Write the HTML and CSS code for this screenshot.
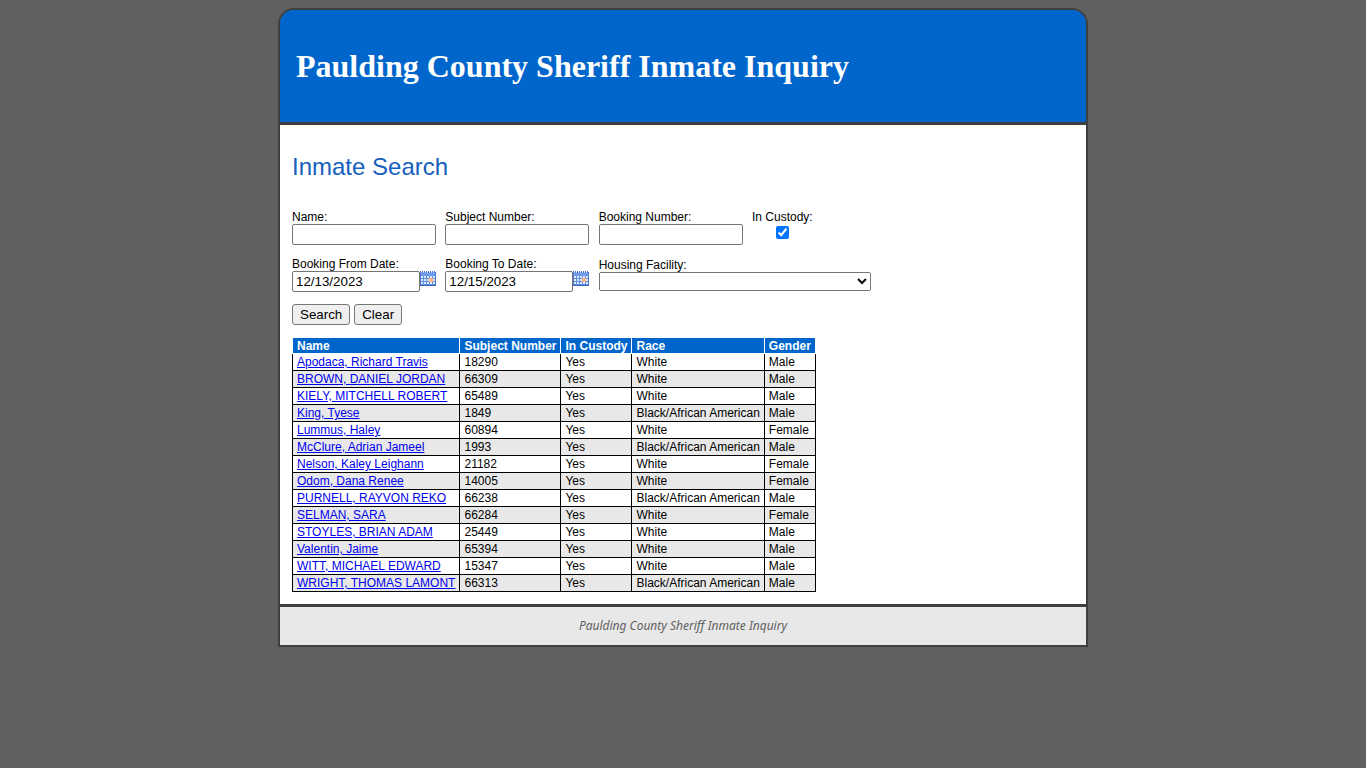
FILE: index.html
```html
<!DOCTYPE html>
<html lang="en">
<head>
  <meta charset="UTF-8">
  <meta name="viewport" content="width=device-width, initial-scale=1">
  <title>Paulding County Sheriff Inmate Inquiry</title>
  <link rel="stylesheet" href="styles.css">
</head>
<body>
  <svg class="sprite" aria-hidden="true">
    <symbol id="calendar" viewBox="0 0 16 16">
      <path fill="#4a78d2" d="M0 1h16v14H0z"/>
      <path fill="#4a78d2" d="M0 0h1v1H0zM2 0h1v1H2zM4 0h1v1H4zM6 0h1v1H6zM8 0h1v1H8zM10 0h1v1h-1zM12 0h1v1h-1zM14 0h1v1h-1z"/>
      <path fill="#bcd0f7" d="M1 1h1v1H1zM3 1h1v1H3zM5 1h1v1H5zM7 1h1v1H7zM9 1h1v1H9zM11 1h1v1h-1zM13 1h1v1h-1z"/>
      <path fill="#6f9aee" d="M1 2h14v3H1z"/>
      <path fill="#5f8ee4" d="M1 5h14v9H1z"/>
      <path fill="#dfeafc" d="M1 5h2v2H1zM4 5h2v2H4zM7 5h2v2H7zM10 5h2v2h-2zM13 5h2v2h-2zM1 8h2v2H1zM4 8h2v2H4zM7 8h2v2H7zM13 8h2v2h-2zM1 11h2v2H1zM4 11h2v2H4zM7 11h2v2H7zM10 11h2v2h-2zM13 11h2v2h-2z"/>
      <path fill="#f8b583" d="M9 7h4v4H9z"/>
      <path fill="#3a67bd" d="M0 14h16v1H0z"/>
    </symbol>
  </svg>

  <div class="page">
    <header class="header">
      <h1>Paulding County Sheriff Inmate Inquiry</h1>
    </header>

    <main class="main">
      <h2>Inmate Search</h2>

      <form id="searchForm">
        <div class="fields">
          <div class="field">
            <label for="name">Name:</label>
            <input type="text" id="name" name="name">
          </div>
          <div class="field">
            <label for="subject">Subject Number:</label>
            <input type="text" id="subject" name="subject">
          </div>
          <div class="field">
            <label for="booking">Booking Number:</label>
            <input type="text" id="booking" name="booking">
          </div>
          <div class="field custody">
            <label for="custody">In Custody:</label>
            <input type="checkbox" id="custody" name="custody" checked>
          </div>
          <div class="field">
            <label for="from">Booking From Date:</label>
            <div class="date">
              <input type="text" id="from" name="from" value="12/13/2023">
              <button type="button" class="picker" aria-label="Pick from date"><svg width="16" height="16"><use href="#calendar"/></svg></button>
            </div>
          </div>
          <div class="field">
            <label for="to">Booking To Date:</label>
            <div class="date">
              <input type="text" id="to" name="to" value="12/15/2023">
              <button type="button" class="picker" aria-label="Pick to date"><svg width="16" height="16"><use href="#calendar"/></svg></button>
            </div>
          </div>
          <div class="field facility">
            <label for="facility">Housing Facility:</label>
            <select id="facility" name="facility">
              <option value=""></option>
            </select>
          </div>
        </div>
        <div class="buttons">
          <button type="submit">Search</button>
          <button type="reset">Clear</button>
        </div>
      </form>

      <table class="results">
        <thead>
          <tr><th>Name</th><th>Subject Number</th><th>In Custody</th><th>Race</th><th>Gender</th></tr>
        </thead>
        <tbody>
          <tr><td><a href="#">Apodaca, Richard Travis</a></td><td>18290</td><td>Yes</td><td>White</td><td>Male</td></tr>
          <tr><td><a href="#">BROWN, DANIEL JORDAN</a></td><td>66309</td><td>Yes</td><td>White</td><td>Male</td></tr>
          <tr><td><a href="#">KIELY, MITCHELL ROBERT</a></td><td>65489</td><td>Yes</td><td>White</td><td>Male</td></tr>
          <tr><td><a href="#">King, Tyese</a></td><td>1849</td><td>Yes</td><td>Black/African American</td><td>Male</td></tr>
          <tr><td><a href="#">Lummus, Haley</a></td><td>60894</td><td>Yes</td><td>White</td><td>Female</td></tr>
          <tr><td><a href="#">McClure, Adrian Jameel</a></td><td>1993</td><td>Yes</td><td>Black/African American</td><td>Male</td></tr>
          <tr><td><a href="#">Nelson, Kaley Leighann</a></td><td>21182</td><td>Yes</td><td>White</td><td>Female</td></tr>
          <tr><td><a href="#">Odom, Dana Renee</a></td><td>14005</td><td>Yes</td><td>White</td><td>Female</td></tr>
          <tr><td><a href="#">PURNELL, RAYVON REKO</a></td><td>66238</td><td>Yes</td><td>Black/African American</td><td>Male</td></tr>
          <tr><td><a href="#">SELMAN, SARA</a></td><td>66284</td><td>Yes</td><td>White</td><td>Female</td></tr>
          <tr><td><a href="#">STOYLES, BRIAN ADAM</a></td><td>25449</td><td>Yes</td><td>White</td><td>Male</td></tr>
          <tr><td><a href="#">Valentin, Jaime</a></td><td>65394</td><td>Yes</td><td>White</td><td>Male</td></tr>
          <tr><td><a href="#">WITT, MICHAEL EDWARD</a></td><td>15347</td><td>Yes</td><td>White</td><td>Male</td></tr>
          <tr><td><a href="#">WRIGHT, THOMAS LAMONT</a></td><td>66313</td><td>Yes</td><td>Black/African American</td><td>Male</td></tr>
        </tbody>
      </table>
    </main>

    <footer class="footer">Paulding County Sheriff Inmate Inquiry</footer>
  </div>
</body>
</html>
```
FILE: styles.css
```css
* {
  box-sizing: border-box;
}

body {
  margin: 8px;
  background: #606060;
  color: #000;
  font-family: Arial, "Liberation Sans", sans-serif;
  font-size: 12px;
  line-height: 14px;
}

.sprite {
  display: none;
}

.page {
  max-width: 810px;
  margin: 0 auto;
  border: 2px solid #3f3f3f;
  border-radius: 16px 16px 0 0;
  overflow: hidden;
}

.header {
  padding: 38px 16px;
  background: #0066cc;
  border-bottom: 3px solid #3f3f3f;
}

h1 {
  margin: 0;
  color: #fff;
  font-family: "Times New Roman", "Liberation Serif", serif;
  font-size: 32px;
  line-height: 36px;
}

.main {
  padding: 28px 12px 12px;
  background: #fff;
}

h2 {
  margin: 0 0 29px;
  color: #1560bd;
  font-size: 24px;
  font-weight: normal;
  line-height: 28px;
}

.fields {
  display: grid;
  grid-template-columns: repeat(4, 144px);
  justify-content: space-between;
  row-gap: 12px;
  align-items: center;
  max-width: 604px;
}

.field label {
  display: block;
}

.field input[type="text"] {
  display: block;
  width: 100%;
  height: 21px;
  padding: 1px 3px;
  border: 1px solid #767676;
  border-radius: 2px;
}

input,
select,
button {
  font-family: Arial, "Liberation Sans", sans-serif;
}

.custody {
  align-self: start;
  justify-self: start;
}

.custody input {
  display: block;
  margin: 2px auto;
}

.date {
  display: flex;
  align-items: flex-start;
}

.date input {
  flex: 1;
  min-width: 0;
}

.picker {
  padding: 0;
  border: 0;
  background: none;
  cursor: pointer;
}

.picker svg {
  display: block;
}

.facility {
  grid-column: span 2;
}

.facility select {
  display: block;
  width: 272px;
  height: 19px;
}

.buttons {
  display: flex;
  gap: 4px;
  margin: 12px 0;
}

.buttons button {
  height: 21px;
  padding: 1px 7px;
  background: #efefef;
  border: 1px solid #767676;
  border-radius: 3px;
}

.results {
  border-collapse: collapse;
}

.results th,
.results td {
  padding: 1px 4px;
  border: 1px solid #000;
  text-align: left;
  white-space: nowrap;
}

.results th {
  padding-bottom: 0;
  background: #0066cc;
  border-color: #fff;
  color: #fff;
}

.results tbody tr:nth-child(even) {
  background: #e8e8e8;
}

.results a {
  color: #0000ee;
}

.footer {
  padding: 12px;
  background: #e8e8e8;
  border-top: 3px solid #3f3f3f;
  color: #606060;
  font-family: "Trebuchet MS", "Noto Sans", sans-serif;
  font-style: italic;
  text-align: center;
}
```
